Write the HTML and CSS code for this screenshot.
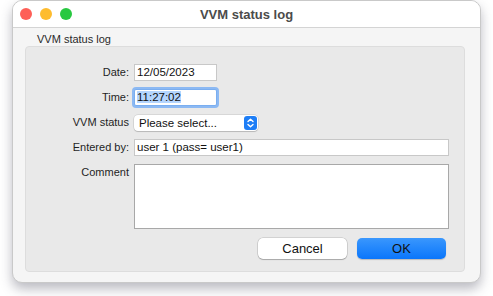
FILE: index.html
```html
<!DOCTYPE html>
<html lang="en">
<head>
  <meta charset="UTF-8">
  <title>VVM status log</title>
  <link rel="stylesheet" href="styles.css">
</head>
<body>
  <div class="window">
    <div class="titlebar">
      <div class="lights">
        <span class="light red"></span>
        <span class="light yellow"></span>
        <span class="light green"></span>
      </div>
      <div class="title">VVM status log</div>
      <div></div>
    </div>
    <div class="content">
      <div class="group-label">VVM status log</div>
      <div class="panel">
        <div class="form">
          <span class="label">Date:</span>
          <div class="field short">12/05/2023</div>

          <span class="label">Time:</span>
          <div class="field short focused"><span class="selected">11:27:02</span></div>

          <span class="label">VVM status</span>
          <div class="select">
            <span>Please select...</span>
            <svg class="stepper" width="13" height="14" viewBox="0 0 13 14">
              <rect x="0" y="0" width="13" height="14" rx="3" fill="#1e7ef6"/>
              <path d="M4 5.5 L6.5 3.2 L9 5.5 M4 8.5 L6.5 10.8 L9 8.5" stroke="#fff" stroke-width="1.4" fill="none" stroke-linecap="round" stroke-linejoin="round"/>
            </svg>
          </div>

          <span class="label">Entered by:</span>
          <div class="field">user 1 (pass= user1)</div>

          <span class="label top">Comment</span>
          <div class="field area"></div>
        </div>
        <div class="buttons">
          <button class="btn">Cancel</button>
          <button class="btn primary">OK</button>
        </div>
      </div>
    </div>
  </div>
</body>
</html>
```

FILE: styles.css
```css
* {
  box-sizing: border-box;
  margin: 0;
  padding: 0;
}
body {
  font-family: 'Liberation Sans', Arial, sans-serif;
  background: #ffffff;
  color: #1f1f1f;
  width: 493px;
  height: 296px;
  overflow: hidden;
}
.window {
  margin-left: 12px;
  width: 469px;
  background: #f5f5f5;
  border: 1px solid #c9c9c9;
  border-radius: 10px;
  box-shadow: 0 6px 12px rgba(60, 60, 80, 0.35);
  overflow: hidden;
}
.titlebar {
  display: grid;
  grid-template-columns: 1fr auto 1fr;
  align-items: center;
  height: 27px;
  background: #ffffff;
  border-bottom: 1px solid #d4d4d4;
}
.lights {
  display: flex;
  gap: 8px;
  padding-left: 7px;
}
.light {
  width: 12px;
  height: 12px;
  border-radius: 50%;
}
.red { background: #fe5f57; }
.yellow { background: #febc2e; }
.green { background: #28c840; }
.title {
  font-size: 13px;
  font-weight: 700;
  color: #4b4b4b;
}
.content {
  padding: 5px 15px 10px 12px;
}
.group-label {
  font-size: 11px;
  line-height: 13px;
  padding-left: 12px;
  color: #2a2a2a;
}
.panel {
  background: #e9e9e9;
  border: 1px solid #dddddd;
  border-radius: 4px;
  padding: 17px 15px 12px 0;
}
.form {
  display: grid;
  grid-template-columns: 103px 1fr;
  column-gap: 5px;
  row-gap: 8px;
  align-items: center;
}
.label {
  font-size: 11px;
  text-align: right;
  line-height: 17px;
}
.label.top {
  align-self: start;
}
.field {
  height: 17px;
  background: #ffffff;
  border: 1px solid #c8c8c8;
  font-size: 11.5px;
  line-height: 15px;
  padding-left: 2px;
  color: #111;
}
.field.short {
  width: 83px;
}
.field.focused {
  border-color: #7aaef0;
  box-shadow: 0 0 0 2px #8cb9f3;
  border-radius: 2px;
}
.selected {
  background: #b4d5fe;
}
.field.area {
  height: 65px;
  border-color: #a8a8a8;
}
.select {
  width: 124px;
  height: 16px;
  display: flex;
  justify-content: space-between;
  align-items: center;
  background: #ffffff;
  border-radius: 4px;
  box-shadow: 0 0 0 0.5px rgba(0, 0, 0, 0.15), 0 1px 1px rgba(0, 0, 0, 0.15);
  padding-left: 5px;
  padding-right: 1px;
  font-size: 11.5px;
  color: #111;
}
.stepper {
  display: block;
}
.buttons {
  display: flex;
  justify-content: flex-end;
  gap: 10px;
  margin-top: 9px;
  padding-right: 3px;
}
.btn {
  width: 89px;
  height: 21px;
  border: none;
  border-radius: 5px;
  background: #ffffff;
  box-shadow: 0 0 0 0.5px rgba(0, 0, 0, 0.2), 0 1px 1px rgba(0, 0, 0, 0.2);
  font-family: 'Liberation Sans', Arial, sans-serif;
  font-size: 13px;
  color: #111;
}
.btn.primary {
  background: linear-gradient(#3a97fd, #0a76fb);
  box-shadow: 0 1px 1px rgba(0, 0, 0, 0.2);
}
```
